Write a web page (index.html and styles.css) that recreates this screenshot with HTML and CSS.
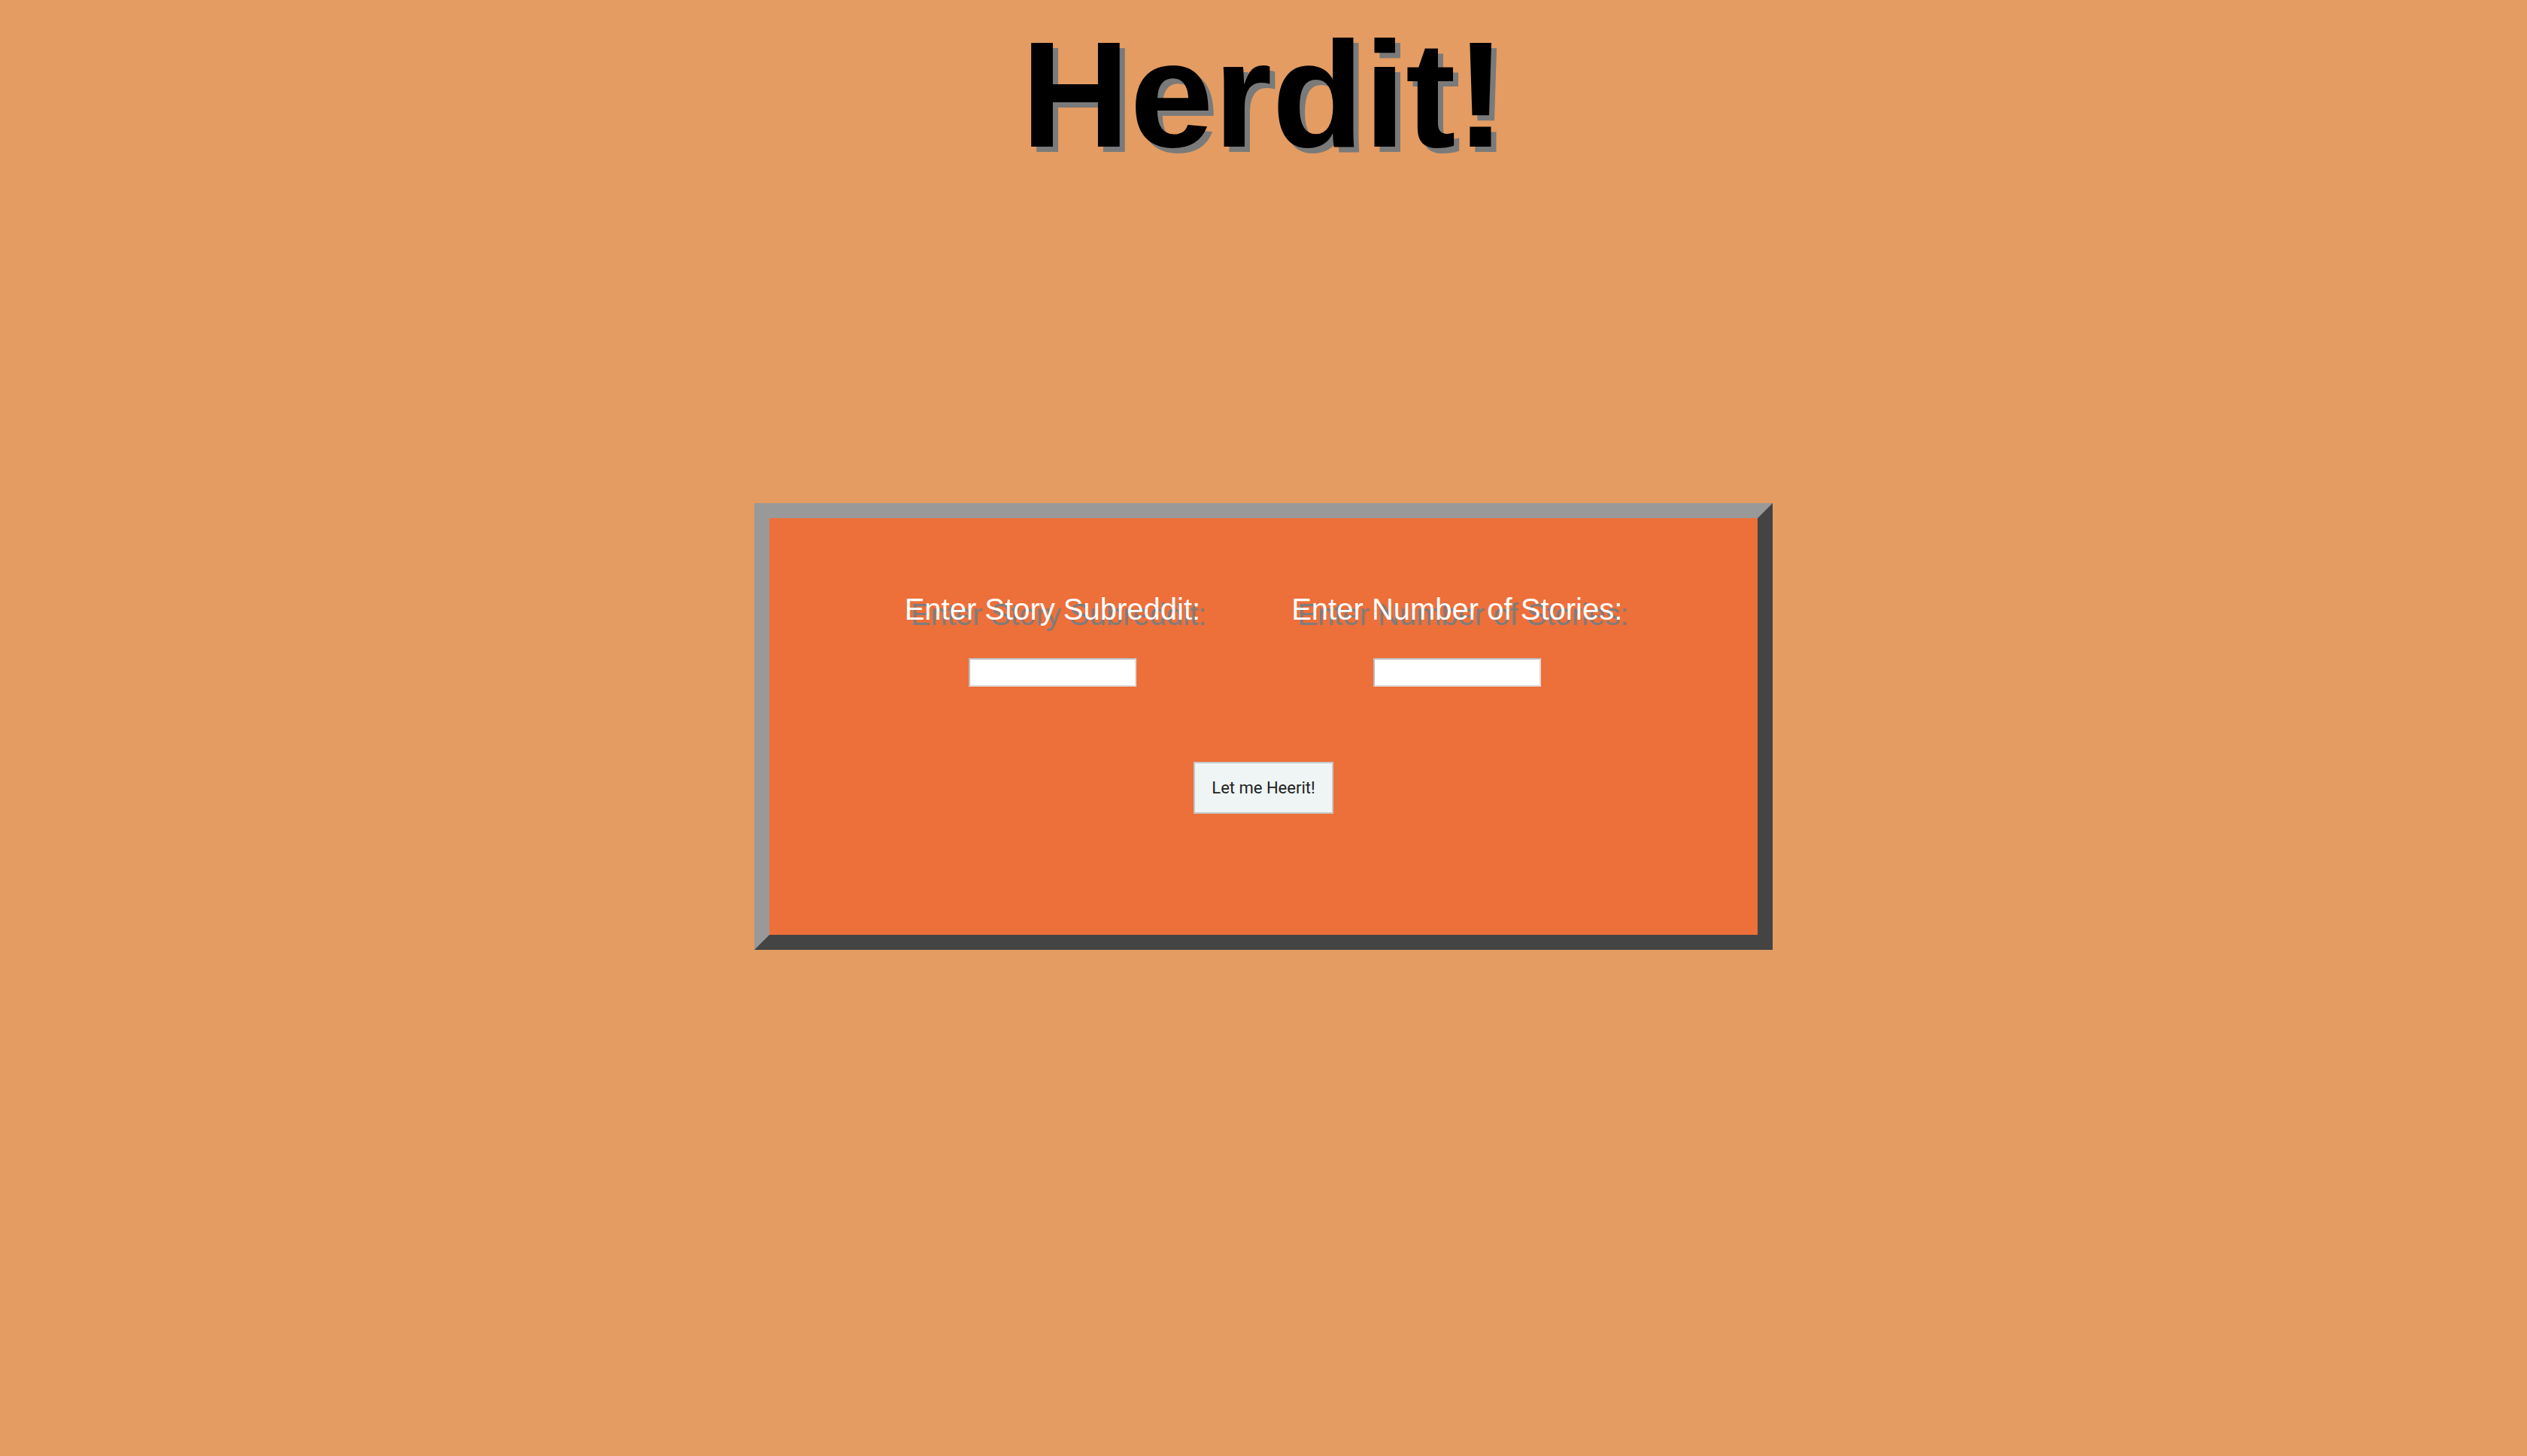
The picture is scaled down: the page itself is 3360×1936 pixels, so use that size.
FILE: index.html
```html
<!DOCTYPE html>
<html lang="en">

<head>
    <meta charset="UTF-8">
    <meta name="viewport" content="width=device-width, initial-scale=1.0">
    <title>Herdit!</title>
    <link rel="stylesheet" href="styles.css">
</head>

<body>

    <h1 class="title">Herdit!</h1>

    <div class="panel">
        <form id="herditForm">
            <div class="fields">
                <div class="field">
                    <label for="subreddit">Enter Story Subreddit:</label>
                    <input type="text" name="subreddit" id="subreddit">
                </div>
                <div class="field">
                    <label for="count">Enter Number of Stories:</label>
                    <input type="text" name="count" id="count">
                </div>
            </div>
            <button type="submit">Let me Heerit!</button>
        </form>
    </div>

</body>

</html>
```

FILE: styles.css
```css
* {
    box-sizing: border-box;
    margin: 0;
    padding: 0;
}

body {
    background-color: #e49c62;
    font-family: "Liberation Sans", Arial, sans-serif;
}

.title {
    text-align: center;
    font-size: 200px;
    font-weight: bold;
    line-height: 1;
    padding-top: 26px;
    color: #000;
    text-shadow: 7px 7px 0 #7a7a7a;
}

.panel {
    width: 1354px;
    height: 594px;
    margin: 443px auto 0;
    background-color: #ed6f3a;
    border: 20px solid;
    border-color: #999999 #444444 #444444 #999999;
    padding-top: 101px;
}

form {
    display: flex;
    flex-direction: column;
    align-items: center;
}

.fields {
    display: flex;
    justify-content: center;
    gap: 121px;
}

.field {
    display: flex;
    flex-direction: column;
    align-items: center;
    gap: 45px;
}

label {
    font-size: 40px;
    line-height: 1;
    color: white;
    text-shadow: 8px 7px 0 #7d7d7d;
}

input {
    width: 223px;
    height: 38px;
    background: white;
    border: 2px solid;
    border-color: #bdbdbd #dcdcdc #dcdcdc #bdbdbd;
}

button {
    margin-top: 100px;
    width: 186px;
    height: 69px;
    background-color: #eef5f4;
    border: 2px solid #c5c9c9;
    color: #222;
    font-family: Roboto, "Liberation Sans", sans-serif;
    font-size: 22px;
    cursor: pointer;
}
```
